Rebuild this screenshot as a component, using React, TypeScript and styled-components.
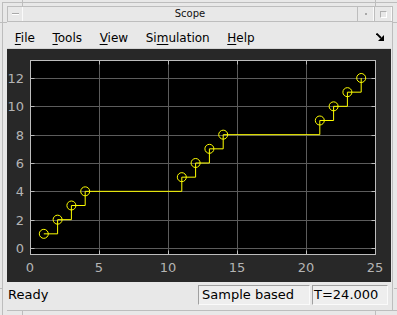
import React from 'react';
import styled, { createGlobalStyle } from 'styled-components';

const GlobalStyle = createGlobalStyle`
    html, body {
        margin: 0;
        padding: 0;
        background: #e8e8e8;
    }
    body {
        font-family: "DejaVu Sans", "Liberation Sans", sans-serif;
    }
`;

const LINE = '#bdbdbd';

const Frame = styled.div`
    position: relative;
    width: 397px;
    height: 315px;
    box-sizing: border-box;
    background: #e8e8e8;
    padding: 2px 0 0 2px;
    overflow: hidden;
`;

const Bevel = styled.div`
    height: 100%;
    box-sizing: border-box;
    border-left: 1px solid ${LINE};
    border-top: 1px solid ${LINE};
    padding: 3px 0 0 4px;
    display: flex;
    flex-direction: column;
`;

const Notch = styled.div<{ $x: number; $y: number; $w: number; $h: number }>`
    position: absolute;
    left: ${(p) => p.$x}px;
    top: ${(p) => p.$y}px;
    width: ${(p) => p.$w}px;
    height: ${(p) => p.$h}px;
    background: ${LINE};
`;

const TitleBar = styled.div`
    display: flex;
    width: 386px;
    height: 16px;
    box-sizing: border-box;
    border: 1px solid ${LINE};
    border-left: none;
    background: #e8e8e8;
`;

const TitleButton = styled.div<{ $w: number }>`
    width: ${(p) => p.$w}px;
    box-sizing: border-box;
    border-left: 1px solid ${LINE};
    border-right: 1px solid #fafafa;
    display: flex;
    align-items: center;
    justify-content: center;
`;

const MenuGlyph = styled.div`
    width: 7px;
    height: 1px;
    background: #a8a8a8;
    border-bottom: 1px solid #fff;
`;

const MinGlyph = styled.div`
    width: 2px;
    height: 2px;
    background: #a8a8a8;
`;

const MaxGlyph = styled.div`
    width: 7px;
    height: 7px;
    box-sizing: border-box;
    border: 1px solid #b0b0b0;
    border-right-color: #fff;
    border-bottom-color: #fff;
`;

const Title = styled.div`
    flex: 1;
    text-align: center;
    font-size: 10px;
    line-height: 14px;
    color: #111;
`;

const ClientRow = styled.div`
    display: flex;
    flex: 1;
    border-bottom: 1px solid ${LINE};
    max-height: 288px;
`;

const Client = styled.div`
    width: 384px;
    display: flex;
    flex-direction: column;
`;

const RightEdge = styled.div`
    width: 1px;
    border-right: 1px solid ${LINE};
`;

const MenuBar = styled.div`
    height: 27px;
    display: flex;
    align-items: center;
    padding-top: 5px;
    box-sizing: border-box;
    border-bottom: 1px solid #d4d4d4;
    font-size: 12px;
    color: #000;

    & > :first-child {
        margin-left: -1px;
    }
`;

const MenuItem = styled.div`
    padding: 0 8.8px;
`;

const Key = styled.span`
    text-decoration: underline;
    text-underline-offset: 2px;
`;

const DockIcon = styled.svg`
    margin-left: auto;
    margin-right: 7px;
    margin-top: -1px;
`;

const PlotPanel = styled.div`
    height: 233px;
    background: #282828;
`;

const StatusBar = styled.div`
    height: 27px;
    display: flex;
    align-items: flex-start;
    gap: 2px;
    padding: 3px 3px 0 0;
    box-sizing: border-box;
    font-size: 13px;
    color: #000;
`;

const ReadyPanel = styled.div`
    flex: 1;
    padding-left: 1px;
    line-height: 20px;
`;

const StatusBox = styled.div<{ $w: number; $pad: number }>`
    width: ${(p) => p.$w}px;
    height: 20px;
    box-sizing: border-box;
    border: 1px solid #a0a0a0;
    border-right-color: #fafafa;
    border-bottom-color: #fafafa;
    background: #eeeeee;
    padding-left: ${(p) => p.$pad}px;
    line-height: 18px;
    white-space: nowrap;
`;

const X = (v: number) => 23 + 13.8 * v;
const Y = (v: number) => 199 - 14.1667 * v;
const c = (n: number) => Math.round(n) + 0.5;

const points: [number, number][] = [
    [1, 1], [2, 2], [3, 3], [4, 4],
    [11, 5], [12, 6], [13, 7], [14, 8],
    [21, 9], [22, 10], [23, 11], [24, 12],
];

const BORDER = '#bdbdbd';
const GRID = '#5c5c5c';
const LABEL = '#b4b4b4';

const Chart: React.FC = () => {
    const left = c(X(0));
    const right = c(X(25));
    const top = 11.5;
    const bottom = 205.5;
    const xTicks = [0, 5, 10, 15, 20, 25];
    const yTicks = [0, 2, 4, 6, 8, 10, 12];

    let d = `M${X(points[0][0])} ${Y(points[0][1])}`;
    for (let i = 1; i < points.length; i++) {
        d += ` H${X(points[i][0])} V${Y(points[i][1])}`;
    }

    return (
        <svg width="384" height="233" style={{ display: 'block' }}>
            <rect x={left} y={top} width={right - left} height={bottom - top} fill="#000" />
            {xTicks.slice(1, -1).map((v) => (
                <line key={`gx${v}`} x1={c(X(v))} x2={c(X(v))} y1={top} y2={bottom} stroke={GRID} />
            ))}
            {yTicks.map((v) => (
                <line key={`gy${v}`} x1={left} x2={right} y1={c(Y(v))} y2={c(Y(v))} stroke={GRID} />
            ))}
            {xTicks.map((v) => (
                <g key={`tx${v}`}>
                    <line x1={c(X(v))} x2={c(X(v))} y1={bottom} y2={bottom - 4} stroke={BORDER} />
                    <line x1={c(X(v))} x2={c(X(v))} y1={top} y2={top + 4} stroke={BORDER} />
                </g>
            ))}
            {yTicks.map((v) => (
                <g key={`ty${v}`}>
                    <line x1={left} x2={left + 4} y1={c(Y(v))} y2={c(Y(v))} stroke={BORDER} />
                    <line x1={right} x2={right - 4} y1={c(Y(v))} y2={c(Y(v))} stroke={BORDER} />
                </g>
            ))}
            <rect x={left} y={top} width={right - left} height={bottom - top} fill="none" stroke={BORDER} />
            <path d={d} fill="none" stroke="#ffff00" strokeWidth="1" />
            {points.map(([px, py]) => (
                <circle key={px} cx={X(px)} cy={Y(py)} r="4.5" fill="none" stroke="#ffff00" strokeWidth="1" />
            ))}
            <g fontFamily='"DejaVu Sans", sans-serif' fontSize="13" fill={LABEL}>
                {yTicks.map((v) => (
                    <text key={`ly${v}`} x="17" y={Y(v) + 5} textAnchor="end">{v}</text>
                ))}
                {xTicks.map((v) => (
                    <text key={`lx${v}`} x={X(v)} y="223" textAnchor="middle">{v}</text>
                ))}
            </g>
        </svg>
    );
};

const App: React.FC = () => {
    return (
        <>
            <GlobalStyle />
            <Frame>
                <Notch $x={22} $y={0} $w={1} $h={6} />
                <Notch $x={0} $y={22} $w={7} $h={1} />
                <Notch $x={375} $y={0} $w={1} $h={6} />
                <Notch $x={393} $y={22} $w={4} $h={1} />
                <Notch $x={0} $y={288} $w={2} $h={1} />
                <Notch $x={22} $y={310} $w={1} $h={5} />
                <Notch $x={394} $y={288} $w={3} $h={1} />
                <Notch $x={375} $y={310} $w={1} $h={5} />
                <Bevel>
                    <TitleBar>
                        <TitleButton $w={16}>
                            <MenuGlyph />
                        </TitleButton>
                        <Title>Scope</Title>
                        <TitleButton $w={17}>
                            <MinGlyph />
                        </TitleButton>
                        <TitleButton $w={18}>
                            <MaxGlyph />
                        </TitleButton>
                    </TitleBar>
                    <ClientRow>
                        <Client>
                            <MenuBar>
                                <MenuItem><Key>F</Key>ile</MenuItem>
                                <MenuItem><Key>T</Key>ools</MenuItem>
                                <MenuItem><Key>V</Key>iew</MenuItem>
                                <MenuItem>Si<Key>m</Key>ulation</MenuItem>
                                <MenuItem><Key>H</Key>elp</MenuItem>
                                <DockIcon width="8" height="8" viewBox="0 0 8 8">
                                    <path d="M0.5 0.5 L5 5" stroke="#000" strokeWidth="1.8" />
                                    <path d="M8 2 L8 8 L2 8 Z" fill="#000" />
                                </DockIcon>
                            </MenuBar>
                            <PlotPanel>
                                <Chart />
                            </PlotPanel>
                            <StatusBar>
                                <ReadyPanel>Ready</ReadyPanel>
                                <StatusBox $w={112} $pad={3}>Sample based</StatusBox>
                                <StatusBox $w={76} $pad={1}>T=24.000</StatusBox>
                            </StatusBar>
                        </Client>
                        <RightEdge />
                    </ClientRow>
                </Bevel>
            </Frame>
        </>
    );
};

export default App;
